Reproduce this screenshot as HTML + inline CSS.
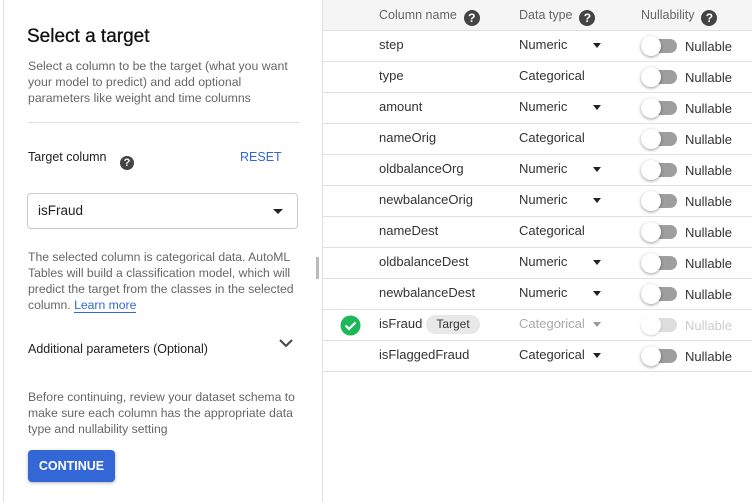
<!DOCTYPE html>
<html><head><style>
*{margin:0;padding:0;box-sizing:border-box}
body{width:752px;height:502px;overflow:hidden;background:#fff;font-family:"Liberation Sans",Arial,sans-serif;position:relative;color:#202124}
.abs{position:absolute}
.left{left:3px;top:0;width:320px;height:502px;border-left:1px solid #e0e0e0;border-right:1px solid #e0e0e0;background:#fff}
.hdr{left:323px;top:0;width:429px;height:31px;background:#f5f5f5;border-bottom:1px solid #e0e0e0}
.row{left:323px;width:429px;height:31px;border-bottom:1px solid #e0e0e0;font-size:13px}
.q{display:inline-block;width:14px;height:14px;border-radius:50%;background:#444;color:#fff;font-size:11px;font-weight:bold;text-align:center;line-height:14px;vertical-align:-2px}
.hdr .q{width:16px;height:16px;line-height:16px;font-size:12px;vertical-align:-3px}
.tri{position:absolute;width:0;height:0;border-left:4px solid transparent;border-right:4px solid transparent;border-top:5px solid #222}
.tog{position:absolute;left:320px;top:8px;width:34px;height:14px;border-radius:7px;background:#9e9e9e}
.knob{position:absolute;left:318px;top:5px;width:20px;height:20px;border-radius:50%;background:#fff;box-shadow:0 1px 3px rgba(0,0,0,.4)}
.nl{position:absolute;left:362px;top:8px;color:#333}
.nm{position:absolute;left:56px;top:6px;color:#333}
.dt{position:absolute;left:196px;top:6px;color:#333}
</style></head><body>
<div class="abs" style="left:99px;top:0;width:100px;height:2px;background:#1a73e8"></div>
<div class="abs left">
 <div class="abs" style="left:23px;top:26px;font-size:19px;color:#111;-webkit-text-stroke:0.3px #111">Select a target</div>
 <div class="abs" style="left:24px;top:58px;width:270px;font-size:12.3px;line-height:16px;color:#666">Select a column to be the target (what you want your model to predict) and add optional parameters like weight and time columns</div>
 <div class="abs" style="left:24px;top:122px;width:271px;height:1px;background:#ddd"></div>
 <div class="abs" style="left:24px;top:150px;font-size:12.5px;color:#222">Target column</div>
 <div class="abs" style="left:116px;top:151px"><span class="q">?</span></div>
 <div class="abs" style="left:236px;top:150px;font-size:12.5px;color:#3367d6">RESET</div>
 <div class="abs" style="left:23px;top:193px;width:271px;height:36px;border:1px solid #ccc;border-radius:4px"><span class="abs" style="left:10px;top:9px;font-size:13.5px;color:#222">isFraud</span><div class="tri" style="left:245px;top:15px;border-left-width:5px;border-right-width:5px;border-top-width:5px"></div></div>
 <div class="abs" style="left:24px;top:249px;width:272px;font-size:12.2px;line-height:16px;color:#666">The selected column is categorical data. AutoML Tables will build a classification model, which will predict the target from the classes in the selected column. <span style="color:#3367d6;border-bottom:1px solid #3367d6">Learn more</span></div>
 <div class="abs" style="left:24px;top:342px;font-size:12.5px;color:#222">Additional parameters (Optional)</div>
 <svg class="abs" style="left:274px;top:337px" width="16" height="12"><path d="M2 3 L8 9 L14 3" stroke="#444" stroke-width="2" fill="none"/></svg>
 <div class="abs" style="left:24px;top:389px;width:275px;font-size:12.2px;line-height:16px;color:#666">Before continuing, review your dataset schema to make sure each column has the appropriate data type and nullability setting</div>
 <div class="abs" style="left:24px;top:450px;width:87px;height:32px;background:#3367d6;border-radius:4px;color:#fff;font-size:12.5px;font-weight:bold;text-align:center;line-height:32px;box-shadow:0 1px 3px rgba(0,0,0,.3)">CONTINUE</div>
 <div class="abs" style="left:312px;top:257px;width:3px;height:22px;background:#bbb"></div>
</div>
<div class="abs hdr">
 <span class="abs" style="left:56px;top:8px;font-size:12.5px;color:#666">Column name &nbsp;<span class="q">?</span></span>
 <span class="abs" style="left:196px;top:8px;font-size:12.5px;color:#666">Data type &nbsp;<span class="q">?</span></span>
 <span class="abs" style="left:318px;top:8px;font-size:12.5px;color:#666">Nullability &nbsp;<span class="q">?</span></span>
</div>
<div class="abs row" style="top:31px"><span class="nm">step</span><span class="dt">Numeric</span><div class="tri" style="left:270px;top:12px"></div><div class="tog"></div><div class="knob"></div><span class="nl">Nullable</span></div>
<div class="abs row" style="top:62px"><span class="nm">type</span><span class="dt">Categorical</span><div class="tog"></div><div class="knob"></div><span class="nl">Nullable</span></div>
<div class="abs row" style="top:93px"><span class="nm">amount</span><span class="dt">Numeric</span><div class="tri" style="left:270px;top:12px"></div><div class="tog"></div><div class="knob"></div><span class="nl">Nullable</span></div>
<div class="abs row" style="top:124px"><span class="nm">nameOrig</span><span class="dt">Categorical</span><div class="tog"></div><div class="knob"></div><span class="nl">Nullable</span></div>
<div class="abs row" style="top:155px"><span class="nm">oldbalanceOrg</span><span class="dt">Numeric</span><div class="tri" style="left:270px;top:12px"></div><div class="tog"></div><div class="knob"></div><span class="nl">Nullable</span></div>
<div class="abs row" style="top:186px"><span class="nm">newbalanceOrig</span><span class="dt">Numeric</span><div class="tri" style="left:270px;top:12px"></div><div class="tog"></div><div class="knob"></div><span class="nl">Nullable</span></div>
<div class="abs row" style="top:217px"><span class="nm">nameDest</span><span class="dt">Categorical</span><div class="tog"></div><div class="knob"></div><span class="nl">Nullable</span></div>
<div class="abs row" style="top:248px"><span class="nm">oldbalanceDest</span><span class="dt">Numeric</span><div class="tri" style="left:270px;top:12px"></div><div class="tog"></div><div class="knob"></div><span class="nl">Nullable</span></div>
<div class="abs row" style="top:279px"><span class="nm">newbalanceDest</span><span class="dt">Numeric</span><div class="tri" style="left:270px;top:12px"></div><div class="tog"></div><div class="knob"></div><span class="nl">Nullable</span></div>
<div class="abs row" style="top:310px">
 <svg class="abs" style="left:17px;top:5px" width="21" height="21"><circle cx="10.5" cy="10.5" r="10" fill="#1eb85a"/><path d="M5.5 10.5 L9 14 L15.5 7.5" stroke="#fff" stroke-width="2.2" fill="none"/></svg>
 <span class="nm">isFraud</span>
 <span class="abs" style="left:103px;top:5px;width:54px;height:19px;border-radius:10px;background:#e8e8e8;font-size:12px;text-align:center;line-height:19px;color:#333">Target</span>
 <span class="dt" style="color:#aaa">Categorical</span><div class="tri" style="left:270px;top:12px;border-top-color:#999"></div>
 <div class="tog" style="background:#ddd"></div><div class="knob" style="box-shadow:0 1px 2px rgba(0,0,0,.2)"></div><span class="nl" style="color:#ccc">Nullable</span></div>
<div class="abs row" style="top:341px"><span class="nm">isFlaggedFraud</span><span class="dt">Categorical</span><div class="tri" style="left:270px;top:12px"></div><div class="tog"></div><div class="knob"></div><span class="nl">Nullable</span></div>
</body></html>
